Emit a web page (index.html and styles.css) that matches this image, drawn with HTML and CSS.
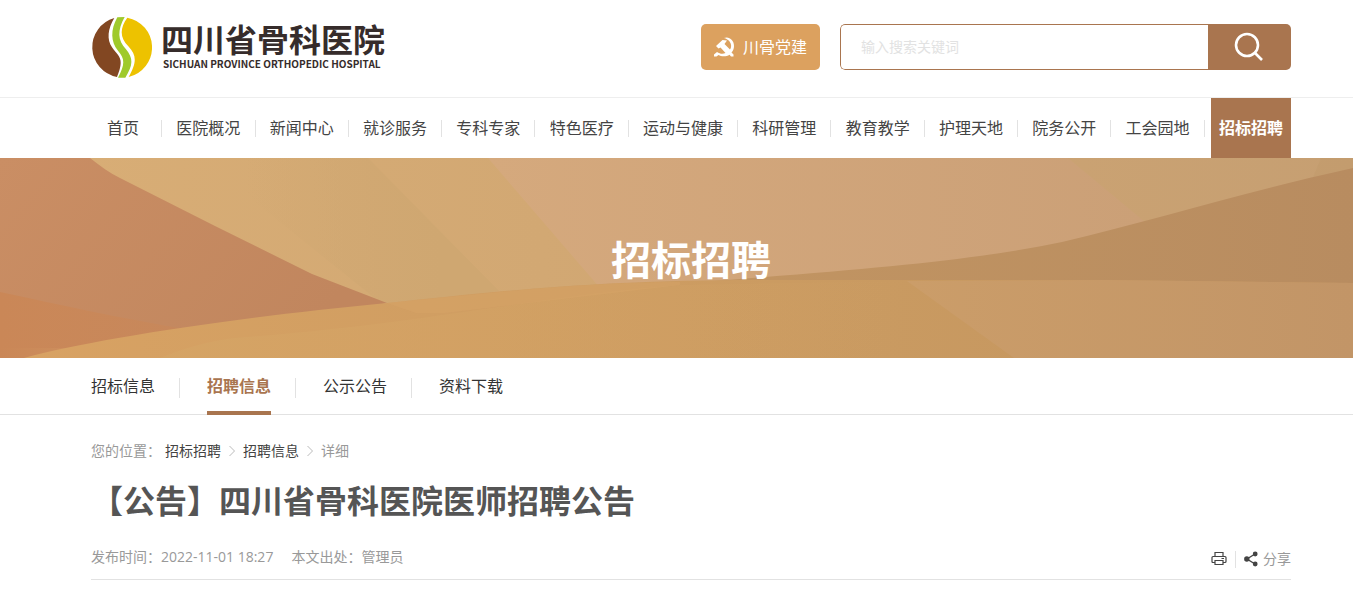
FILE: index.html
```html
<!DOCTYPE html>
<html lang="zh-CN">
<head>
<meta charset="utf-8">
<title>【公告】四川省骨科医院医师招聘公告</title>
<link rel="stylesheet" href="styles.css">
</head>
<body>
<header class="header wrap">
  <a class="logo" href="#">
    <svg class="logo-mark" viewBox="18 20 183 183" aria-hidden="true">
      <path fill="#824722" d="M88 23C68 55 65 88 81 111C94 130 108 139 107 158C106 176 101 186 96 200A91 91 0 0 1 88 23Z"/>
      <path fill="#9fca2b" d="M97 21C76 59 77 95 99 121C120 145 120 162 99 202L121 202C145 164 145 144 123 117C97 89 97 60 119 20Z"/>
      <path fill="#edc200" d="M127 22C103 55 105 83 130 108C157 137 154 158 131 200A91 91 0 0 0 127 22Z"/>
    </svg>
    <span class="logo-text">
      <span class="logo-cn">四川省骨科医院</span>
      <span class="logo-en">SICHUAN PROVINCE ORTHOPEDIC HOSPITAL</span>
    </span>
  </a>
  <a class="party" href="#">
    <svg class="party-icon" viewBox="0 0 21 20" aria-hidden="true">
      <path fill="#fff" d="M10 1C15-1 20 3 20 9C20 12 19 14 17.500 15.500L19.500 17.500V19.500H17L15.500 17.800C12 20 7 19.500 4.500 18L2.500 19.500H0V17.500L3 15C6 17 9 17.200 11.500 16L6.500 10.500L4.500 11.500L2 9L8.500 3L13 3.500L10.500 7L16 12.500C18.500 9 17 3 10 1Z"/>
    </svg>
    <span>川骨党建</span>
  </a>
  <form class="search" role="search">
    <input class="search-input" type="text" placeholder="输入搜索关键词" aria-label="输入搜索关键词">
    <button class="search-button" type="button" aria-label="搜索">
      <svg class="search-icon" viewBox="0 0 30 30" fill="none" stroke="#fff" stroke-width="2.600" aria-hidden="true"><circle cx="13" cy="13" r="11"/><path d="M20.500 20.500L28 28"/></svg>
    </button>
  </form>
</header>
<nav class="nav" aria-label="主导航">
  <ul class="nav-list wrap">
    <li><a class="nav-link nav-home" href="#">首页</a></li><li class="tick"></li>
    <li><a class="nav-link" href="#">医院概况</a></li><li class="tick"></li>
    <li><a class="nav-link" href="#">新闻中心</a></li><li class="tick"></li>
    <li><a class="nav-link" href="#">就诊服务</a></li><li class="tick"></li>
    <li><a class="nav-link" href="#">专科专家</a></li><li class="tick"></li>
    <li><a class="nav-link" href="#">特色医疗</a></li><li class="tick"></li>
    <li><a class="nav-link" href="#">运动与健康</a></li><li class="tick"></li>
    <li><a class="nav-link" href="#">科研管理</a></li><li class="tick"></li>
    <li><a class="nav-link" href="#">教育教学</a></li><li class="tick"></li>
    <li><a class="nav-link" href="#">护理天地</a></li><li class="tick"></li>
    <li><a class="nav-link" href="#">院务公开</a></li><li class="tick"></li>
    <li><a class="nav-link" href="#">工会园地</a></li><li class="tick"></li>
    <li><a class="nav-link nav-active" href="#" aria-current="page">招标招聘</a></li>
  </ul>
</nav>
<section class="banner">
  <svg class="banner-art" viewBox="0 0 1353 200" preserveAspectRatio="none" aria-hidden="true">
    <defs>
      <linearGradient id="sky"><stop offset="0" stop-color="#d9ae76"/><stop offset=".4" stop-color="#d2a873"/><stop offset="1" stop-color="#c69f72"/></linearGradient>
      <linearGradient id="shade" gradientUnits="userSpaceOnUse" x1="250" y1="90" x2="440" y2="80"><stop offset="0" stop-color="#cfa771" stop-opacity="0"/><stop offset="1" stop-color="#cfa771"/></linearGradient>
      <linearGradient id="rose"><stop offset="0" stop-color="#d5a97d"/><stop offset="1" stop-color="#cba077"/></linearGradient>
      <linearGradient id="clay" x2="1" y2=".4"><stop offset="0" stop-color="#ca8e64"/><stop offset="1" stop-color="#c1865e"/></linearGradient>
      <linearGradient id="ember"><stop offset="0" stop-color="#ca8757"/><stop offset="1" stop-color="#ca8757" stop-opacity=".5"/></linearGradient>
      <linearGradient id="gold"><stop offset="0" stop-color="#d8a263"/><stop offset=".65" stop-color="#c99a61"/><stop offset="1" stop-color="#c2945f"/></linearGradient>
      <linearGradient id="glow"><stop offset="0" stop-color="#d5a566" stop-opacity=".7"/><stop offset="1" stop-color="#d5a566" stop-opacity="0"/></linearGradient>
      <linearGradient id="dune"><stop offset="0" stop-color="#c29562"/><stop offset="1" stop-color="#b88c60"/></linearGradient>
      <linearGradient id="sand"><stop offset="0" stop-color="#cb9d69"/><stop offset="1" stop-color="#c29567"/></linearGradient>
    </defs>
    <path fill="url(#sky)" d="M0 0H1353V200H0Z"/>
    <path fill="url(#shade)" d="M200 0H368L499 133L387 150Z"/>
    <path fill="url(#rose)" d="M488 0H1068L1145 64L900 130H600Z"/>
    <path fill="#c29b6c" opacity=".6" d="M1321 0H1353V12L1312 22Z"/>
    <path fill="url(#clay)" d="M0 0H90C100 8 110 15 120 20L215 68L312 116L387 145L180 190H0Z"/>
    <path fill="url(#ember)" d="M0 134C60 147 120 160 190 172L24 202H0Z"/>
    <path fill="url(#dune)" d="M700 124C870 111 970 103 1062 84C1160 61 1240 35 1353 10V130H700Z"/>
    <path fill="url(#gold)" d="M24 200C90 182 230 160 387 145C490 134 600 121 775 122L1105 122L1353 125V200Z"/>
    <path fill="url(#glow)" d="M160 200C200 184 225 180 260 178C430 164 540 138 680 127L907 123V200Z"/>
    <path fill="url(#sand)" d="M907 123L1105 122L1353 125V200H1014Z"/>
    <path fill="#d7a568" opacity=".45" d="M387 145L416 155H445L680 127V124C580 124 480 136 387 145Z"/>
  </svg>
  <h2 class="banner-title">招标招聘</h2>
</section>
<nav class="subnav" aria-label="栏目导航">
  <div class="subnav-list wrap">
    <a class="subnav-link" href="#">招标信息</a><span class="subnav-tick"></span>
    <a class="subnav-link subnav-active" href="#" aria-current="page">招聘信息</a><span class="subnav-tick"></span>
    <a class="subnav-link" href="#">公示公告</a><span class="subnav-tick"></span>
    <a class="subnav-link" href="#">资料下载</a>
  </div>
</nav>
<main class="wrap">
  <nav class="crumbs" aria-label="面包屑">
    <span class="crumb-label">您的位置：</span>
    <a class="crumb-link" href="#">招标招聘</a>
    <svg class="chevron" viewBox="0 0 8 12" aria-hidden="true"><path d="M1.500 1L6.500 6L1.500 11"/></svg>
    <a class="crumb-link" href="#">招聘信息</a>
    <svg class="chevron" viewBox="0 0 8 12" aria-hidden="true"><path d="M1.500 1L6.500 6L1.500 11"/></svg>
    <span>详细</span>
  </nav>
  <h1 class="title">【公告】四川省骨科医院医师招聘公告</h1>
  <div class="meta">
    <div class="meta-info"><span>发布时间：2022-11-01 18:27</span><span>本文出处：管理员</span></div>
    <div class="tools">
      <button class="tool" type="button" aria-label="打印">
        <svg class="print-icon" viewBox="0 0 15 14" fill="none" stroke="#444" aria-hidden="true"><path d="M3.500 4.500V.5H11.500V4.500M3.500 10.500H1.500Q.5 10.500 .5 9.500V5.500Q.5 4.500 1.500 4.500H13.500Q14.500 4.500 14.500 5.500V9.500Q14.500 10.500 13.500 10.500H11.500M10 6.500H12.500M3.500 8.500H11.500V12.500H3.500Z" stroke-width="1.200"/></svg>
      </button>
      <span class="tool-tick"></span>
      <button class="tool" type="button">
        <svg class="share-icon" viewBox="0 0 14 16" aria-hidden="true"><path d="M11 3L3 8L11 13" fill="none" stroke="#444" stroke-width="1.400"/><g fill="#444"><circle cx="11.200" cy="3" r="2.400"/><circle cx="2.800" cy="8" r="2.700"/><circle cx="11.200" cy="13" r="2.400"/></g></svg>
        <span>分享</span>
      </button>
    </div>
  </div>
</main>
</body>
</html>
```
FILE: styles.css
```css
* { box-sizing: border-box; }
body {
  margin: 0;
  background: #fff;
  color: #444;
  font: 16px/24px "Open Sans", "Noto Sans CJK SC", sans-serif;
}
a { color: inherit; text-decoration: none; }
button, input { font: inherit; color: inherit; }
svg { display: block; flex: none; }
ul, h1, h2 { margin: 0; padding: 0; list-style: none; }
.wrap { padding-left: 91px; padding-right: 62px; }

.header { display: flex; align-items: center; height: 97px; padding-bottom: 3px; }
.logo { display: flex; align-items: center; gap: 9px; margin-right: auto; color: #362c2b; }
.logo-mark { width: 61px; height: 61px; }
.logo-text { display: flex; flex-direction: column; font-family: "Noto Sans CJK SC", sans-serif; font-weight: 700; white-space: nowrap; }
.logo-cn { font-size: 32px; line-height: 32px; }
.logo-en { font-size: 10px; line-height: 16px; padding: 2px 0 0 2px; }
.party {
  display: flex; align-items: center; justify-content: center; gap: 8px;
  width: 119px; height: 46px; margin-right: 20px;
  border-radius: 5px; background: #dca15f; color: #fff;
}
.party-icon { width: 21px; height: 20px; }
.search { display: flex; width: 451px; height: 46px; border-radius: 5px; overflow: hidden; }
.search-input {
  flex: 1; min-width: 0; padding: 0 20px;
  border: 1px solid #a9754f; border-right: 0; border-radius: 5px 0 0 5px;
  background: #fff; font-size: 14px; outline: 0;
}
.search-input::placeholder { color: #e2e2e2; opacity: 1; }
.search-button { display: flex; align-items: center; justify-content: center; width: 83px; border: 0; padding: 0 2px 0 0; background: #a9754f; }
.search-icon { width: 30px; height: 30px; }

.nav { border-top: 1px solid #eee; }
.nav-list { display: flex; align-items: center; justify-content: space-between; white-space: nowrap; }
.nav-link { display: block; padding: 0 8px; line-height: 60px; }
.nav-home { padding: 0 16px; }
.nav-active { background: #a9754f; color: #fff; font-weight: 700; }
.tick { width: 1px; height: 17px; background: #e2e2e2; }

.banner { position: relative; display: flex; align-items: center; justify-content: center; height: 200px; padding: 4px 0 0 29px; }
.banner-art { position: absolute; inset: 0; width: 100%; height: 100%; }
.banner-title { position: relative; color: #fff; font-size: 40px; line-height: 60px; font-weight: 700; }

.subnav { border-bottom: 1px solid #e2e2e2; color: #333; }
.subnav-list { display: flex; align-items: center; height: 56px; }
.subnav-link { height: 57px; line-height: 56px; }
.subnav-active { border-bottom: 4px solid #a9754f; color: #a9754f; font-weight: 700; }
.subnav-tick { width: 1px; height: 20px; margin: 4px 27px 0 24px; background: #e2e2e2; }

.crumbs { display: flex; align-items: center; gap: 7px; padding-top: 24px; color: #999; font-size: 14px; }
.crumb-label { margin-right: -3px; }
.crumb-link { color: #444; }
.chevron { width: 8px; height: 12px; fill: none; stroke: #bbb; }
.title { padding-top: 14px; color: #555; font-size: 32px; line-height: 48px; font-weight: 700; }
.meta { display: flex; align-items: flex-start; justify-content: space-between; padding: 20px 0 8px; border-bottom: 1px solid #e2e2e2; color: #999; font-size: 14px; }
.meta-info { display: flex; gap: 18px; }
.tools { display: flex; align-items: center; gap: 8px; padding-top: 2px; }
.tool { display: flex; align-items: center; gap: 5px; padding: 0; border: 0; background: none; }
.tool-tick { width: 1px; height: 17px; background: #e2e2e2; }
.print-icon { width: 16px; height: 14px; }
.share-icon { width: 14px; height: 16px; }
```
